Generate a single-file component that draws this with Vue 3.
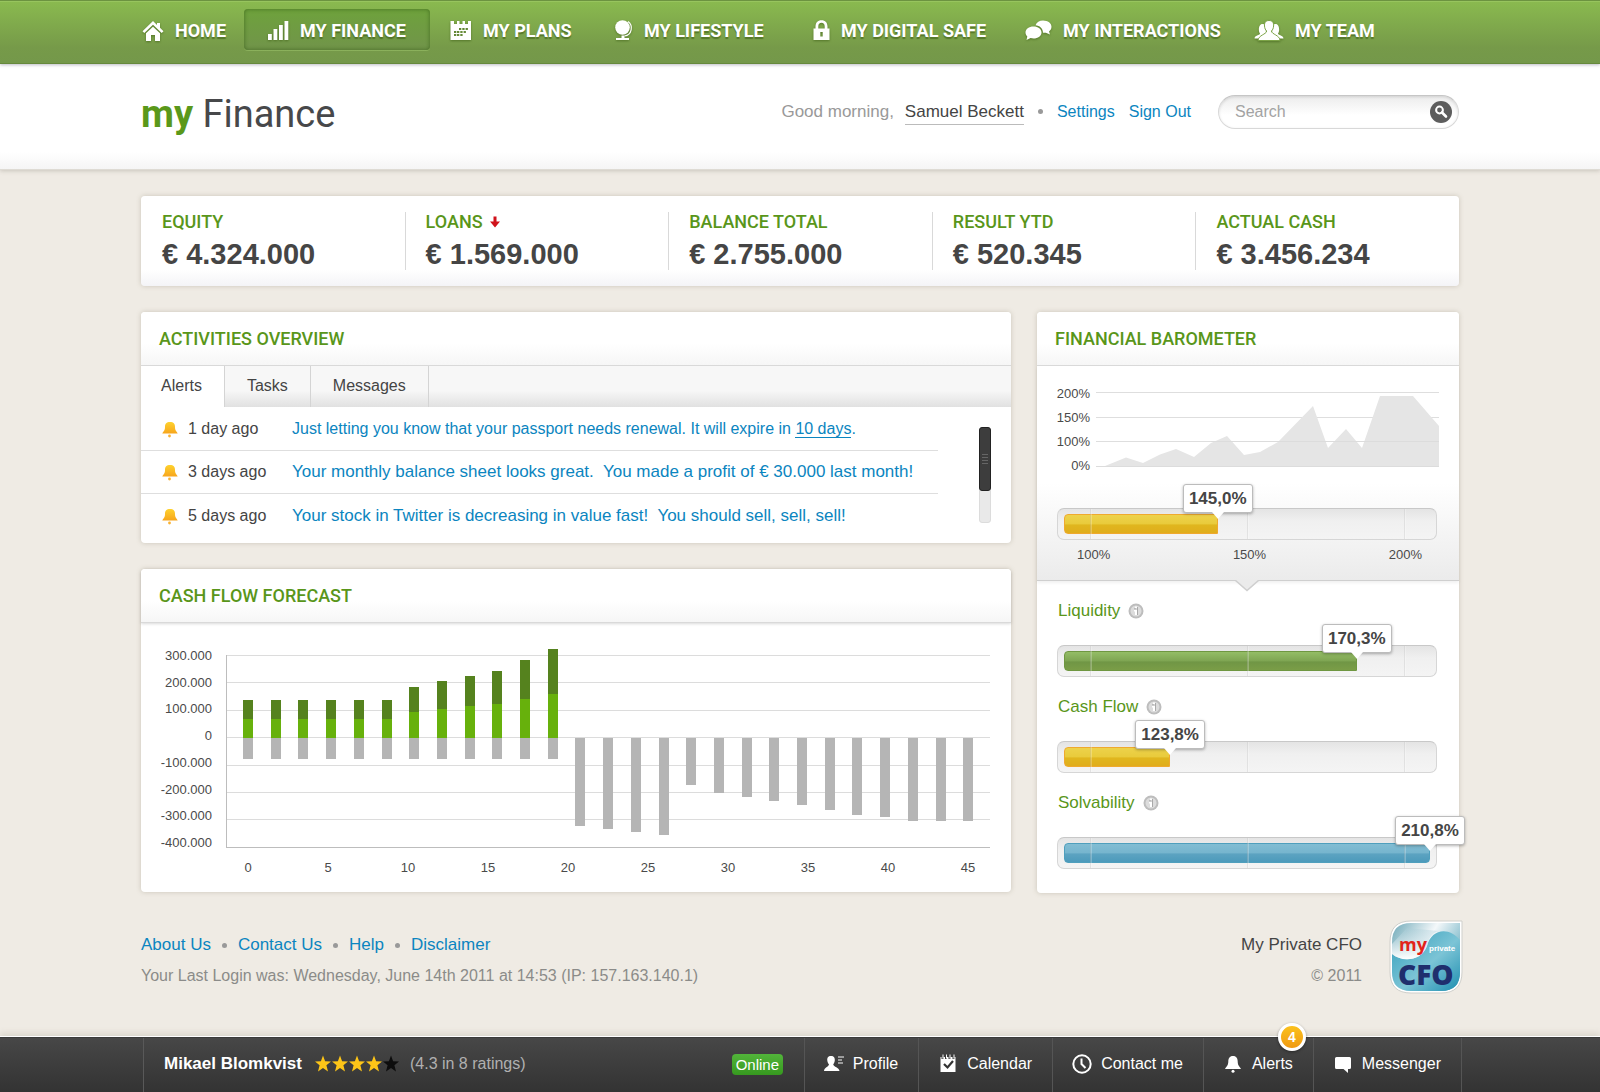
<script setup>
import { ref } from 'vue'

const query = ref('')

const stats = [
  { label: 'EQUITY', value: '€ 4.324.000' },
  { label: 'LOANS', value: '€ 1.569.000', down: true },
  { label: 'BALANCE TOTAL', value: '€ 2.755.000' },
  { label: 'RESULT YTD', value: '€ 520.345' },
  { label: 'ACTUAL CASH', value: '€ 3.456.234' },
]

const tabs = ['Alerts', 'Tasks', 'Messages']
const activeTab = ref('Alerts')

const ticks = [7, 50, 93]
const reference = { value: '145,0%', fill: 42, color: 'yellow' }
const gauges = [
  { name: 'Liquidity', value: '170,3%', fill: 80, color: 'green' },
  { name: 'Cash Flow', value: '123,8%', fill: 29, color: 'yellow' },
  { name: 'Solvability', value: '210,8%', fill: 100, color: 'blue full' },
]

// Cash flow chart, values in thousands
const income = [137, 137, 137, 137, 137, 137, 186, 207, 226, 246, 285, 324]
const secured = [69, 69, 69, 69, 69, 69, 95, 105, 115, 124, 142, 162]
const losses = [320, 333, 342, 353, 172, 201, 217, 231, 246, 261, 280, 290, 303, 303, 303]
const zero = 115
const y = (v) => Math.round(zero - v * 0.274)
const barX = (i) => Math.round(102 + i * 27.7)
const bars = []
income.forEach((v, i) => {
  bars.push({ x: barX(i), y: y(v), h: y(secured[i]) - y(v), c: '#55821e' })
  bars.push({ x: barX(i), y: y(secured[i]), h: zero - y(secured[i]), c: '#67b10c' })
  bars.push({ x: barX(i), y: zero, h: y(-77) - zero, c: '#b5b5b5' })
})
losses.forEach((v, i) => {
  bars.push({ x: barX(i + income.length), y: zero, h: y(-v) - zero, c: '#b5b5b5' })
})
const levels = [300, 200, 100, 0, -100, -200, -300, -400]
const yLabels = levels.map((v, i) => ({ text: v === 0 ? '0' : v + '.000', y: 37 + Math.round(i * 26.7) }))
const xLabels = Array.from({ length: 10 }, (_, i) => ({ text: i * 5, x: 107 + i * 80 }))
</script>

<template>
  <div class="page">
    <nav class="topnav" aria-label="Main">
      <div class="wrap navgrid">
        <a href="#" class="home">
          <svg width="22" height="22" viewBox="0 0 22 22"><path d="M11 1 0.5 11.2 2.3 13 11 4.8 19.700 13 21.500 11.200 18 7.800V3h-3v2z" /><path d="M11 6.800 4 13.300V21h5v-6h4v6h5v-7.700z" /></svg>
          <span>HOME</span>
        </a>
        <a href="#" class="current" aria-current="page">
          <svg width="22" height="22" viewBox="0 0 22 22"><path d="M1 14h3.800v6H1zM6.500 9H10.300V20H6.500zM12 5h3.800v15H12zM17.500 1H21.300v19h-3.800z" /></svg>
          <span>MY FINANCE</span>
        </a>
        <a href="#">
          <svg width="22" height="22" viewBox="0 0 22 22"><path fill-rule="evenodd" d="M0.500 1h3.500v3h3V1h2.500v3h3V1h2.500v3h3V1h3v19H0.500zM9 8v2h2.300V8zm3.300 0v2h2.300V8zm3.300 0v2h2.300V8zM4 11v2h2.300v-2zm3 0v2h2.300v-2zm3.300 0v2h2.300v-2zm3.300 0v2h2.300v-2zM4 14v2h2.300v-2zm3 0v2h2.300v-2zm3.300 0v2h2.300v-2z" /></svg>
          <span>MY PLANS</span>
        </a>
        <a href="#">
          <svg width="19" height="22" viewBox="0 0 19 22"><circle cx="8.500" cy="7.500" r="7.300" /><path d="M14 1.500C19.500 5.500 18 15 10.500 16" fill="none" stroke="#fff" stroke-width="1.200" /><path d="M7.500 15.500h3v2.500h4.500v2H2v-2h5.500z" /></svg>
          <span>MY LIFESTYLE</span>
        </a>
        <a href="#">
          <svg width="17" height="22" viewBox="0 0 17 22"><path fill-rule="evenodd" d="M0.500 8.500H2.500V6.500C2.500 2.500 4.700 0.200 8.500 0.200S14.500 2.500 14.500 6.500V8.500h2V20H0.500zM5.300 8.500h6.400V6.500C11.700 4 10.500 2.800 8.500 2.800S5.300 4 5.300 6.500zM7.300 12v4.500h2.400V12z" /></svg>
          <span>MY DIGITAL SAFE</span>
        </a>
        <a href="#">
          <svg width="27" height="22" viewBox="0 0 27 22"><path d="M18 0.500c5 0 8.500 2.800 8.500 6.200 0 2-1 3.600-2.500 4.700l1 3.100-4.200-1.800c-1 .2-2 .2-2.800.1C18 8.500 14.500 5.500 10.500 5.300 11.500 2.500 14.500 .5 18 .5z" /><path d="M8.500 6.500c4.600 0 8 2.600 8 6s-3.400 6-8 6c-1 0-2-.1-2.900-.4L1.500 20l.8-3.600C1 15.300.5 14 .5 12.500c0-3.400 3.400-6 8-6z" /></svg>
          <span>MY INTERACTIONS</span>
        </a>
        <a href="#">
          <svg width="30" height="22" viewBox="0 0 30 22"><path d="M8.500 4c3 0 3.600 1 3.400 3v6L7 18.500H0.500c.3-3.500 5-3 5.500-5C4 11 4.500 4 8.500 4zM21.500 4c4 0 4.500 7 2.500 9.500.5 2 5.200 1.500 5.500 5H23L18.100 13V7c-.2-2 .4-3 3.400-3z" /><path d="M15 0.500c3.800 0 4.800 2.500 4.600 5.500-.2 2.500-1 4-2.200 5 .5 3.500 8.200 4 8.700 9.500H4c.5-5.500 8.200-6 8.700-9.500-1.200-1-2-2.500-2.200-5C10.300 3 11.300 .5 15 .5z" stroke="#7ba346" stroke-width="1" /></svg>
          <span>MY TEAM</span>
        </a>
      </div>
    </nav>

    <header class="masthead">
      <div class="wrap headrow">
        <h1><b>my</b> Finance</h1>
        <div class="account">
          <span class="hello">Good morning,</span>
          <a href="#" class="user">Samuel Beckett</a>
          <i class="dot"></i>
          <a href="#" class="settings">Settings</a>
          <a href="#">Sign Out</a>
        </div>
        <form class="search" role="search" @submit.prevent>
          <input v-model="query" type="text" placeholder="Search" aria-label="Search" />
          <button type="submit" aria-label="Start search">
            <svg width="22" height="22" viewBox="0 0 22 22"><circle cx="11" cy="11" r="11" fill="#5d5d5d" /><circle cx="9.500" cy="9" r="3.400" fill="none" stroke="#fff" stroke-width="2" /><path d="M12 11.500 16 15.500" stroke="#fff" stroke-width="2.600" stroke-linecap="round" /></svg>
          </button>
        </form>
      </div>
    </header>

    <main class="wrap">
      <section class="card stats" aria-label="Key figures">
        <div v-for="s in stats" :key="s.label" class="stat">
          <h2>
            {{ s.label }}
            <svg v-if="s.down" class="down" width="10" height="12" viewBox="0 0 10 12" aria-label="down"><path d="M3.500 0.500h3V5.500H10L5 11.500 0 5.500h3.500z" fill="#d0121b" /></svg>
          </h2>
          <p>{{ s.value }}</p>
        </div>
      </section>

      <div class="columns">
        <div class="left">
          <section class="card">
            <h2 class="title">ACTIVITIES OVERVIEW</h2>
            <div class="tabs" role="tablist">
              <button
                v-for="t in tabs" :key="t" type="button" role="tab"
                :aria-selected="t === activeTab" :class="{ on: t === activeTab }" @click="activeTab = t"
              >{{ t }}</button>
            </div>
            <div class="feed">
              <ul>
                <li>
                  <svg width="16" height="18" viewBox="0 0 16 18"><use href="#bell" /></svg>
                  <time>1 day ago</time>
                  <span class="msg">Just letting you know that your passport needs renewal. It will expire in <a href="#">10 days</a>.</span>
                </li>
                <li>
                  <svg width="16" height="18" viewBox="0 0 16 18"><use href="#bell" /></svg>
                  <time>3 days ago</time>
                  <span class="msg big">Your monthly balance sheet looks great.&nbsp; You made a profit of € 30.000 last month!</span>
                </li>
                <li>
                  <svg width="16" height="18" viewBox="0 0 16 18"><use href="#bell" /></svg>
                  <time>5 days ago</time>
                  <span class="msg big">Your stock in Twitter is decreasing in value fast!&nbsp; You should sell, sell, sell!</span>
                </li>
              </ul>
              <div class="scroll"><div class="thumb"><i></i><i></i><i></i><i></i></div></div>
            </div>
          </section>

          <section class="card">
            <h2 class="title shaded">CASH FLOW FORECAST</h2>
            <svg class="chart" viewBox="0 0 870 269" role="img" aria-label="Cash flow forecast">
              <g fill="#dcdcdc">
                <rect v-for="(v, i) in levels" :key="v" x="86" :y="Math.round(32 + i * 27.4)" width="763" height="1" />
              </g>
              <rect x="85" y="32" width="1" height="193" fill="#bdbdbd" />
              <rect x="85" y="224" width="764" height="1" fill="#bdbdbd" />
              <rect v-for="(b, i) in bars" :key="i" :x="b.x" :y="b.y" width="10" :height="b.h" :fill="b.c" />
              <g text-anchor="end"><text v-for="l in yLabels" :key="l.y" x="71" :y="l.y">{{ l.text }}</text></g>
              <g text-anchor="middle"><text v-for="l in xLabels" :key="l.x" :x="l.x" y="249">{{ l.text }}</text></g>
            </svg>
          </section>
        </div>

        <section class="card barometer">
          <h2 class="title">FINANCIAL BAROMETER</h2>
          <div class="summary">
            <svg class="chart" viewBox="0 0 422 142" role="img" aria-label="Barometer history">
              <g fill="#dedede"><rect x="59" y="26" width="343" height="1" /><rect x="59" y="51" width="343" height="1" /><rect x="59" y="75" width="343" height="1" /><rect x="59" y="100" width="343" height="1" /></g>
              <path fill="#e5e5e5" d="M59 101 68 100 89 91.500 106 97 123 88.500 139 83 157 91 174 77 190 70 207 89 223 86 241 76 276 40 291 82 309 63 325 82 343 30H376L402 60V101z" />
              <path fill="#dcdcdc" d="M59 100h343v1H59zM174 75h228v1H174z" />
              <g text-anchor="end"><text x="53" y="32">200%</text><text x="53" y="56">150%</text><text x="53" y="80">100%</text><text x="53" y="104">0%</text></g>
            </svg>
            <div class="gauge">
              <div class="fillarea">
                <div class="fill" :class="reference.color" :style="{ width: reference.fill + '%' }"></div>
                <i v-for="t in ticks" :key="t" class="tick" :style="{ left: t + '%' }"></i>
                <output class="tip" :style="{ left: reference.fill + '%' }">{{ reference.value }}</output>
              </div>
            </div>
            <div class="scale"><span>100%</span><span>150%</span><span>200%</span></div>
            <svg class="notch" width="24" height="12" viewBox="0 0 24 12"><path d="M0 0H24L12 11z" fill="#ebebeb" /><path d="M0 0 12 10.500 24 0" fill="none" stroke="#cfcfcf" stroke-width="1.500" /></svg>
          </div>
          <div v-for="g in gauges" :key="g.name" class="metric">
            <h3>
              {{ g.name }}
              <button type="button" :aria-label="'About ' + g.name">
                <svg width="16" height="16" viewBox="0 0 16 16"><circle cx="8" cy="8" r="7.500" fill="#bdbdbd" /><circle cx="8" cy="8" r="5.500" fill="#dcdcdc" /><path d="M7 3.500h2v2H7zM6 7h3v5H7V8.500H6z" fill="#fff" /><path d="M9.500 4v8M6 5.800h2.500" stroke="#a9a9a9" fill="none" /></svg>
              </button>
            </h3>
            <div class="gauge">
              <div class="fillarea">
                <div class="fill" :class="g.color" :style="{ width: g.fill + '%' }"></div>
                <i v-for="t in ticks" :key="t" class="tick" :style="{ left: t + '%' }"></i>
                <output class="tip" :style="{ left: g.fill + '%' }">{{ g.value }}</output>
              </div>
            </div>
          </div>
        </section>
      </div>
    </main>

    <footer class="wrap foot">
      <div>
        <p class="links">
          <a href="#">About Us</a><i class="dot"></i><a href="#">Contact Us</a><i class="dot"></i><a href="#">Help</a><i class="dot"></i><a href="#">Disclaimer</a>
        </p>
        <p class="login">Your Last Login was: Wednesday, June 14th 2011 at 14:53 (IP: 157.163.140.1)</p>
      </div>
      <div class="owner">
        <p>My Private CFO</p>
        <p class="login">© 2011</p>
      </div>
      <svg class="logo" width="74" height="74" viewBox="0 0 74 74" role="img" aria-label="My Private CFO">
        <defs>
          <linearGradient id="lg1" x1="0" y1="0" x2="1" y2="0.600"><stop offset="0" stop-color="#6fa9b8" /><stop offset="0.500" stop-color="#f4f8fa" /><stop offset="1" stop-color="#5fa9bd" /></linearGradient>
          <linearGradient id="lg2" x1="0" y1="0" x2="1" y2="1"><stop offset="0" stop-color="#2f9dba" /><stop offset="0.550" stop-color="#7cc4d6" /><stop offset="1" stop-color="#1f8fb0" /></linearGradient>
          <linearGradient id="lg3" x1="0" y1="0" x2="0" y2="1"><stop offset="0" stop-color="#a9cdd8" stop-opacity="0.300" /><stop offset="1" stop-color="#fff" /></linearGradient>
          <clipPath id="lc"><path d="M22 3H71V52Q71 71 52 71H22Q3 71 3 52V22Q3 3 22 3z" /></clipPath>
        </defs>
        <path d="M22 1H73V52Q73 73 52 73H22Q1 73 1 52V22Q1 1 22 1z" fill="#fff" stroke="#cfcfcb" stroke-width="1" />
        <g clip-path="url(#lc)">
          <rect x="3" y="3" width="68" height="68" fill="url(#lg1)" />
          <path d="M3 34C12 42 32 42 38 26 42 9 60 6 71 20V71H3z" fill="url(#lg2)" />
          <path d="M3 34C12 42 32 42 38 26 40 17 44 12 50 11L18 8 3 24z" fill="url(#lg3)" />
        </g>
        <text x="10" y="31" class="lmy">my</text>
        <text x="40" y="31" class="lpr">private</text>
        <text x="9" y="65" class="lcfo">CFO</text>
      </svg>
    </footer>

    <div class="dock">
      <div class="dockrow">
        <div class="advisor">
          <b>Mikael Blomkvist</b>
          <svg width="84" height="18" viewBox="0 0 84 18" role="img" aria-label="4 of 5 stars">
            <path v-for="n in 5" :key="n" :transform="`translate(${(n - 1) * 17} 0)`" :fill="n < 5 ? '#fdc518' : '#0d0d0d'" d="M8 0.500 10.100 6.300 16 6.500 11.400 10.300 13 16.500 8 13 3 16.500 4.600 10.300 0 6.500 5.900 6.300z" />
          </svg>
          <span>(4.3 in 8 ratings)</span>
        </div>
        <span class="online">Online</span>
        <div class="tools">
          <a href="#">
            <svg width="20" height="20" viewBox="0 0 20 20"><path d="M7 2c3 0 4 2 3.800 4.500-.2 2-.9 3-1.600 3.800.5 3 5.800 3 6.300 6.700H0c.3-3.700 4.500-3.700 5-6.700-.8-.8-1.500-1.800-1.700-3.800C3 4 4 2 7 2z" /><path d="M14 3h6M14 6h4M14 9h5" stroke="#bbb" stroke-width="1.300" /></svg>
            Profile
          </a>
          <a href="#">
            <svg width="20" height="20" viewBox="0 0 20 20"><path d="M2.500 3h15v15h-15z" /><path d="M4.500 1v4M8 1v4M11.500 1v4M15.500 1v4" stroke="#3c3c3c" stroke-width="2" /><path d="M5 0.500v4M8.500 0.500v4M12 0.500v4M16 0.500v4" stroke="#fff" /><path d="M6 10l3.500 3.500L15 7" fill="none" stroke="#333" stroke-width="2.200" /></svg>
            Calendar
          </a>
          <a href="#">
            <svg width="20" height="20" viewBox="0 0 20 20"><circle cx="10" cy="10" r="8.700" fill="none" stroke="#fff" stroke-width="2" /><path d="M9.500 4.500V10l4 4" fill="none" stroke="#fff" stroke-width="2" /></svg>
            Contact me
          </a>
          <a href="#">
            <svg width="20" height="20" viewBox="0 0 20 20"><path d="M10 2c3.500 0 4.700 2.500 4.700 5.500 0 4 1.800 5 3.300 7.500H2c1.500-2.500 3.300-3.500 3.300-7.500C5.300 4.500 6.500 2 10 2z" /><circle cx="10" cy="17.300" r="1.500" /></svg>
            Alerts
            <em>4</em>
          </a>
          <a href="#">
            <svg width="20" height="20" viewBox="0 0 20 20"><path d="M3.500 3h13q1.500 0 1.500 1.500v9q0 1.500-1.500 1.500H15v4l-4.500-4h-7Q2 15 2 13.500v-9Q2 3 3.500 3z" /></svg>
            Messenger
          </a>
        </div>
      </div>
    </div>

    <svg width="0" height="0" class="defs" aria-hidden="true">
      <defs>
        <linearGradient id="gold" x1="0" y1="0" x2="0" y2="1"><stop offset="0" stop-color="#fed22e" /><stop offset="1" stop-color="#f7a51c" /></linearGradient>
        <g id="bell" fill="url(#gold)"><path d="M8 2c3.600 0 5 1.800 5 5 0 3.500 1.300 3.800 2.700 6.500H.3C1.700 10.800 3 10.500 3 7c0-3.200 1.400-5 5-5z" /><circle cx="7.500" cy="16" r="1.400" fill="#f9b233" /></g>
      </defs>
    </svg>
  </div>
</template>

<style>
body {
  margin: 0;
  background: #efebe4;
}
</style>

<style scoped>
* {
  box-sizing: border-box;
}
.page {
  min-height: 100vh;
  display: flex;
  flex-direction: column;
  font: 16px/20px "Liberation Sans", Arial, sans-serif;
  color: #444;
}
h1, h2, h3, p, ul {
  margin: 0;
  padding: 0;
  font-weight: 400;
}
a {
  color: #0b85c0;
  text-decoration: none;
}
button {
  font: inherit;
  color: inherit;
  border: 0;
  background: none;
  padding: 0;
  cursor: pointer;
}
.defs {
  position: absolute;
}
.wrap {
  width: 100%;
  max-width: 1318px;
  margin: 0 auto;
}

/* Main navigation */
.topnav {
  height: 64px;
  background: linear-gradient(#8aba4f, #769a49 75%, #74984a);
  border-top: 1px solid #6c9340;
  border-bottom: 1px solid #66893c;
  box-shadow: inset 0 1px 0 #97c45e, 0 1px 3px rgba(60, 60, 90, 0.35);
  position: relative;
}
.navgrid {
  display: grid;
  grid-template-columns: 103px 186px 164px 199px 212px 229px auto;
  padding-top: 8px;
}
.navgrid a {
  height: 41px;
  display: flex;
  align-items: center;
  gap: 11px;
  padding: 2px 0 0 20px;
  font: 700 18px/22px Roboto, sans-serif;
  color: #fff;
  white-space: nowrap;
  text-shadow: 0 2px 1px rgba(60, 90, 20, 0.6);
  border-radius: 4px;
}
.navgrid svg {
  fill: #fff;
  filter: drop-shadow(0 1px 1px rgba(60, 90, 20, 0.6));
}
.navgrid a.home {
  padding-left: 1px;
}
.navgrid a.current {
  padding-left: 23px;
  background: linear-gradient(#6ea23c, #71944a);
  box-shadow: inset 0 0 4px rgba(50, 90, 20, 0.7), 0 1px 0 rgba(160, 200, 110, 0.5);
}

/* Title and account */
.masthead {
  background: linear-gradient(#fff 84%, #f5f5f5);
  border-bottom: 1px solid #dedbd4;
  box-shadow: 0 1px 4px rgba(90, 85, 70, 0.25);
}
.headrow {
  height: 105px;
  display: flex;
  align-items: center;
  padding-bottom: 10px;
}
h1 {
  font: 400 38px/48px Roboto, sans-serif;
  color: #47484a;
  padding-top: 4px;
}
h1 b {
  font-weight: 700;
  color: #5a981a;
}
.account {
  margin-left: auto;
  display: flex;
  align-items: center;
  white-space: nowrap;
}
.hello {
  font-size: 17px;
  color: #999;
  margin-right: 11px;
}
.user {
  font-size: 17px;
  color: #444;
  line-height: 25px;
  border-bottom: 1px solid #bbb;
}
.dot {
  width: 5px;
  height: 5px;
  border-radius: 50%;
  background: #999;
  margin: 0 14px;
}
.settings {
  margin-right: 14px;
}
.search {
  width: 241px;
  height: 34px;
  margin-left: 27px;
  display: flex;
  align-items: center;
  padding: 0 6px 0 16px;
  border: 1px solid #d8d8d8;
  border-top-color: #c6c6c6;
  border-radius: 17px;
  background: linear-gradient(#ececec, #fff 60%);
  box-shadow: inset 0 1px 3px rgba(0, 0, 0, 0.12);
}
.search input {
  flex: 1;
  min-width: 0;
  border: 0;
  padding: 0;
  outline: 0;
  background: none;
  font: 16px/20px "Liberation Sans", Arial, sans-serif;
  color: #444;
}
.search input::placeholder {
  color: #a3a3a3;
  opacity: 1;
}
.search button, h3 button {
  display: flex;
}

/* Cards */
main {
  padding-top: 26px;
}
.card {
  background: #fff;
  border-radius: 4px;
  box-shadow: 0 0 5px rgba(110, 100, 75, 0.28);
}
.stats {
  display: grid;
  grid-template-columns: repeat(5, 1fr);
  padding: 16px 0;
  margin-bottom: 26px;
  background: linear-gradient(#fff 82%, #f4f4f7);
}
.stat {
  height: 58px;
  padding-left: 20px;
  border-left: 1px solid #d9d9d9;
}
.stat:first-child {
  border-left-color: transparent;
}
.stat h2, .title {
  font: 500 18px/20px Roboto, sans-serif;
  color: #59961a;
}
.down {
  margin-left: 3px;
}
.stat p {
  font: 700 29px/34px "Liberation Sans", Arial, sans-serif;
  color: #454545;
  padding-top: 5px;
}
.columns {
  display: grid;
  grid-template-columns: minmax(0, 870fr) minmax(0, 422fr);
  gap: 26px;
}
.left {
  display: flex;
  flex-direction: column;
  gap: 26px;
}
.title {
  padding: 17px 18px 16px;
  border-bottom: 1px solid #d9d9d9;
  background: linear-gradient(#fff 60%, #f6f6f6);
  border-radius: 4px 4px 0 0;
}
.shaded {
  box-shadow: 0 1px 3px rgba(0, 0, 0, 0.15);
}
.tabs {
  height: 41px;
  display: flex;
  background: linear-gradient(#f7f7f7 60%, #e1e1e1);
}
.tabs button {
  padding: 0 22px 2px;
  border-right: 1px solid #d4d4d4;
}
.tabs button:first-child {
  padding-left: 20px;
}
.tabs button.on {
  background: #fff;
}
.feed {
  display: flex;
  padding: 1px 20px 6px 0;
}
.feed ul {
  flex: 1;
  max-width: 797px;
  list-style: none;
}
.feed li {
  height: 43px;
  display: flex;
  align-items: center;
  padding-left: 21px;
  border-bottom: 1px solid #dedede;
  white-space: nowrap;
}
.feed li:last-child {
  border-bottom: 0;
}
.feed time {
  width: 104px;
  margin-left: 10px;
}
.msg {
  color: #0b85c0;
}
.big {
  font-size: 17px;
}
.msg a {
  border-bottom: 1px solid #0b85c0;
}
.scroll {
  width: 12px;
  height: 96px;
  margin: 19px 0 0 auto;
  border-radius: 3px;
  background: #e9e9e9;
  border: 1px solid #dcdcdc;
}
.thumb {
  height: 64px;
  margin: -1px;
  border-radius: 3px;
  background: #3d3d3d;
  border: 1px solid #222;
  display: flex;
  flex-direction: column;
  align-items: center;
  justify-content: center;
  gap: 2px;
}
.thumb i {
  width: 6px;
  height: 1px;
  background: #666;
}
.chart {
  display: block;
  width: 100%;
  font: 13px "Liberation Sans", Arial, sans-serif;
  fill: #4a4a4a;
}

/* Barometer */
.summary {
  position: relative;
  background: linear-gradient(#fff 55%, #ebebeb);
  border-bottom: 1px solid #cfcfcf;
  box-shadow: 0 2px 3px rgba(0, 0, 0, 0.06);
}
.notch {
  position: absolute;
  left: 198px;
  top: 100%;
}
.gauge {
  margin: 0 22px 0 20px;
  padding: 5px 6px;
  border: 1px solid #d6d6d6;
  border-top-color: #c8c8c8;
  border-radius: 7px;
  background: linear-gradient(#e4e4e4, #f0f0f0 40%, #f4f4f4);
}
.fillarea {
  position: relative;
  height: 20px;
  display: flex;
}
.fill {
  border-radius: 4px 0 0 4px;
}
.full {
  border-radius: 4px;
}
.yellow {
  background: linear-gradient(#edd24b, #e9cb3c 48%, #e0b61e 56%, #e0ad1c);
  border: 1px solid #efa92e;
}
.green {
  background: linear-gradient(#94bd66, #7fa653 48%, #709645 56%, #7a9d47);
  border: 1px solid #6f9741;
}
.blue {
  background: linear-gradient(#82bdd3, #76b5ce 48%, #5ca3c1 56%, #4c9abb);
  border: 1px solid #4f9fbd;
}
.tick {
  position: absolute;
  top: -5px;
  bottom: -5px;
  width: 2px;
  background: rgba(255, 255, 255, 0.25);
  border-left: 1px solid rgba(0, 0, 0, 0.08);
}
.tip {
  position: absolute;
  top: -27px;
  width: 70px;
  margin-left: -35px;
  border: 1px solid #bcbcbc;
  border-radius: 3px;
  background: #fff;
  box-shadow: 0 1px 3px rgba(0, 0, 0, 0.3);
  font: 700 17px/27px "Liberation Sans", Arial, sans-serif;
  color: #454545;
  text-align: center;
}
.summary .tip {
  top: -30px;
}
.tip::after {
  content: "";
  position: absolute;
  left: 28px;
  top: 100%;
  border: 6px solid transparent;
  border-top: 7px solid #fff;
  border-bottom: 0;
}
.scale {
  display: flex;
  justify-content: space-between;
  padding: 7px 37px 18px 40px;
  font-size: 13px;
  line-height: 15px;
  color: #4a4a4a;
}
.metric {
  padding-bottom: 18px;
}
.metric:last-child {
  padding-bottom: 24px;
}
.summary + .metric {
  padding-top: 18px;
}
h3 {
  display: flex;
  align-items: center;
  gap: 8px;
  padding-left: 21px;
  margin-bottom: 22px;
  font-size: 17px;
  line-height: 24px;
  color: #59961a;
}

/* Footer */
.foot {
  display: flex;
  padding: 27px 0 36px;
}
.foot p {
  font-size: 17px;
  line-height: 21px;
  padding-top: 14px;
}
.links {
  display: flex;
  align-items: center;
}
.links .dot {
  margin: 1px 11px 0;
}
.foot p.login {
  font-size: 16px;
  padding-top: 10px;
  color: #8b8b89;
}
.owner {
  margin-left: auto;
  text-align: right;
}
.logo {
  margin: 0 -4px 0 27px;
}
.lmy {
  font: 700 18px "Open Sans", sans-serif;
  fill: #e2231a;
}
.lpr {
  font: 700 8px "Liberation Sans", Arial, sans-serif;
  fill: #fff;
}
.lcfo {
  font: 800 28px "Open Sans", sans-serif;
  fill: #1f2f6d;
}

/* Advisor bar */
.dock {
  margin-top: auto;
  height: 55px;
  background: linear-gradient(#474747, #333);
  border-top: 1px solid #3a3a3a;
  box-shadow: 0 -1px 0 #fff, 0 -4px 6px rgba(110, 100, 75, 0.15);
  color: #fff;
}
.dockrow {
  height: 100%;
  max-width: 1324px;
  margin: 0 auto;
  padding-left: 5px;
  display: flex;
  align-items: center;
}
.advisor {
  align-self: stretch;
  display: flex;
  align-items: center;
  gap: 11px;
  padding: 0 0 2px 20px;
  border-left: 1px solid #595959;
  white-space: nowrap;
}
.advisor b {
  font-size: 17px;
  margin-right: 2px;
}
.advisor span {
  color: #b0b0b0;
}
.online {
  margin: 0 21px 2px auto;
  width: 51px;
  border-radius: 4px;
  background: linear-gradient(#52b53a, #36991f);
  font-size: 15px;
  line-height: 21px;
  text-align: center;
}
.tools {
  align-self: stretch;
  display: flex;
  border-right: 1px solid #555;
}
.tools a {
  position: relative;
  display: flex;
  align-items: center;
  gap: 9px;
  padding: 0 20px 3px 19px;
  border-left: 1px solid #555;
  color: #fff;
  white-space: nowrap;
}
.tools svg {
  fill: #fff;
}
.tools em {
  position: absolute;
  top: -15px;
  right: 7px;
  width: 28px;
  height: 28px;
  border: 3px solid #fff;
  border-radius: 50%;
  background: linear-gradient(#fbc11d, #f09a13);
  box-shadow: 0 1px 3px rgba(0, 0, 0, 0.4);
  font: 700 14px/22px "Liberation Sans", Arial, sans-serif;
  text-align: center;
}
</style>
